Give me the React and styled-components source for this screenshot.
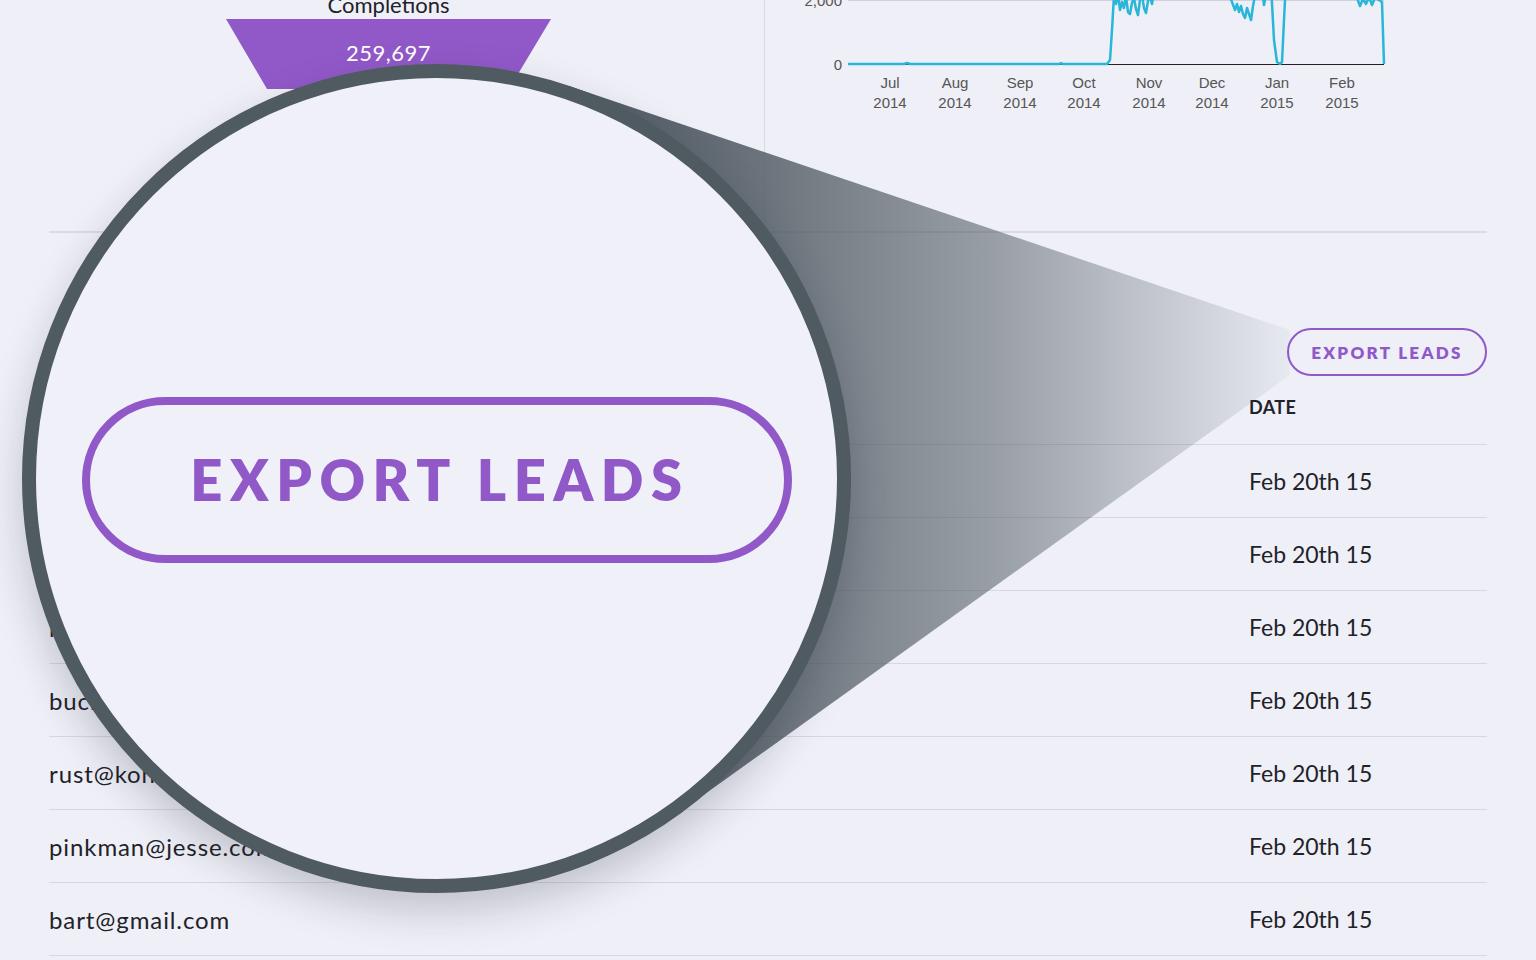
import React from "react";
import styled, { createGlobalStyle } from "styled-components";

const GlobalStyle = createGlobalStyle`
   html, body {
      margin: 0;
      padding: 0;
      background: #eeeff7;
   }
   body {
      font-family: "Lato", "Noto Sans", sans-serif;
      color: #1f2228;
   }
`;

const PURPLE = "#9159c8";

const Page = styled.div`
   position: relative;
   width: 1536px;
   height: 960px;
   overflow: hidden;
   background: #eeeff7;
`;

const TopSection = styled.section`
   display: flex;
   height: 231px;
   margin: 0 49px;
   border-bottom: 2px solid #d9dae3;
`;

const FunnelPanel = styled.div`
   width: 716px;
   padding-right: 36px;
   box-sizing: border-box;
   border-right: 1px solid #d9dae3;
   display: flex;
   flex-direction: column;
   align-items: center;
`;

const FunnelTitle = styled.div`
   margin-top: -8px;
   font-size: 22px;
   line-height: 26px;
   color: #1f2228;
`;

const FunnelStep = styled.div`
   margin-top: 1px;
   width: 325px;
   height: 70px;
   padding-bottom: 3px;
   box-sizing: border-box;
   background: ${PURPLE};
   clip-path: polygon(0 0, 100% 0, 283px 100%, 41px 100%);
   display: flex;
   align-items: center;
   justify-content: center;
   color: #fff;
   font-size: 22px;
   letter-spacing: 0.5px;
`;

const ChartPanel = styled.div`
   flex: 1;
`;

const ChartSvg = styled.svg`
   display: block;
   font-family: "Liberation Sans", Arial, sans-serif;
   font-size: 15px;
`;

const TableSection = styled.section`
   margin: 0 49px;
`;

const Toolbar = styled.div`
   display: flex;
   justify-content: flex-end;
   padding-top: 95px;
`;

const ExportButton = styled.button`
   width: 200px;
   height: 48px;
   box-sizing: border-box;
   border: 2px solid ${PURPLE};
   border-radius: 24px;
   background: transparent;
   color: ${PURPLE};
   font-family: "Lato", sans-serif;
   font-weight: 800;
   font-size: 17px;
   letter-spacing: 2.3px;
   padding: 0;
   cursor: pointer;
   position: relative;
   z-index: 3;
`;

const Row = styled.div`
   display: grid;
   grid-template-columns: 1200px 1fr;
   align-items: center;
   box-sizing: border-box;
   height: ${(p) => (p.$header ? "69px" : "73px")};
   padding-bottom: ${(p) => (p.$header ? "6px" : "0")};
   border-bottom: 1px solid #d6d7e0;
   font-size: ${(p) => (p.$header ? "18px" : "23px")};
   font-weight: ${(p) => (p.$header ? 700 : 400)};
   letter-spacing: ${(p) => (p.$header ? "0.4px" : "0")};
   color: #1f2228;
`;

const Email = styled.span`
   font-size: 24px;
   letter-spacing: 0.9px;
`;

const Cone = styled.svg`
   position: absolute;
   left: 0;
   top: 0;
   z-index: 1;
   pointer-events: none;
`;

const Lens = styled.div`
   position: absolute;
   left: 22px;
   top: 64px;
   width: 829px;
   height: 829px;
   box-sizing: border-box;
   border: 14px solid #4f5a61;
   border-radius: 50%;
   background: #f0f0f8;
   box-shadow: 0 18px 40px rgba(30, 35, 50, 0.22);
   z-index: 2;
   display: flex;
   align-items: center;
   justify-content: center;
`;

const BigButton = styled.div`
   width: 710px;
   height: 166px;
   box-sizing: border-box;
   border: 8px solid ${PURPLE};
   border-radius: 83px;
   display: flex;
   align-items: center;
   justify-content: center;
   color: ${PURPLE};
   font-weight: 800;
   font-size: 56px;
   letter-spacing: 7.6px;
   padding-left: 7px;
   margin-top: 2px;
`;

const months = [
   ["Jul", "2014", 890],
   ["Aug", "2014", 955],
   ["Sep", "2014", 1020],
   ["Oct", "2014", 1084],
   ["Nov", "2014", 1149],
   ["Dec", "2014", 1212],
   ["Jan", "2015", 1277],
   ["Feb", "2015", 1342],
];

const series =
   "M849 64 L905 64 L908 63 L911 64 L1060 64 L1062 63 L1064 64 L1108 64 L1111 60 L1113 30 L1115 -5 L1117 4 L1119 -6 L1121 10 L1123 2 L1125 8 L1127 -4 L1129 12 L1131 14 L1133 3 L1135 -2 L1137 9 L1139 15 L1141 0 L1143 -5 L1145 8 L1147 13 L1149 1 L1151 -3 L1153 4 L1155 -8 L1158 -30 L1225 -30 L1230 -5 L1233 2 L1236 10 L1238 4 L1240 12 L1242 6 L1244 14 L1246 18 L1248 8 L1250 14 L1252 20 L1254 6 L1256 -4 L1258 -20 L1262 -20 L1265 5 L1268 -10 L1272 -15 L1275 40 L1278 62 L1281 64 L1283 62 L1285 20 L1287 -20 L1355 -20 L1358 -2 L1361 6 L1364 -1 L1367 4 L1370 -3 L1373 5 L1376 -2 L1380 0 L1383 2 L1385 64";

const leads = [
   "walter@white.com",
   "saul@goodman.com",
   "hank@schrader.com",
   "buckley@bmail.com",
   "rust@kohle.com",
   "pinkman@jesse.com",
   "bart@gmail.com",
];

function Chart() {
   return (
      <ChartSvg width="721" height="120" viewBox="766 0 721 120">
         <line x1="849" y1="0.5" x2="1385" y2="0.5" stroke="#d0d0d8" />
         <line x1="849" y1="64.5" x2="1385" y2="64.5" stroke="#222" />
         <text x="843" y="6" textAnchor="end" fill="#555">2,000</text>
         <text x="843" y="70" textAnchor="end" fill="#555">0</text>
         {months.map(([m, y, x]) => (
            <g key={m} fill="#555" textAnchor="middle">
               <text x={x + 1} y="88">{m}</text>
               <text x={x + 1} y="108">{y}</text>
            </g>
         ))}
         <path d={series} fill="none" stroke="#29b6d8" strokeWidth="2.5" strokeLinejoin="round" />
      </ChartSvg>
   );
}

export default function App() {
   return (
      <Page>
         <GlobalStyle />
         <TopSection>
            <FunnelPanel>
               <FunnelTitle>Completions</FunnelTitle>
               <FunnelStep>259,697</FunnelStep>
            </FunnelPanel>
            <ChartPanel>
               <Chart />
            </ChartPanel>
         </TopSection>

         <TableSection>
            <Toolbar>
               <ExportButton>EXPORT LEADS</ExportButton>
            </Toolbar>
            <Row $header>
               <span>EMAIL</span>
               <span>DATE</span>
            </Row>
            {leads.map((email) => (
               <Row key={email}>
                  <Email>{email}</Email>
                  <span>Feb 20th 15</span>
               </Row>
            ))}
         </TableSection>

         <Cone width="1536" height="960" viewBox="0 0 1536 960">
            <defs>
               <linearGradient id="coneFade" gradientUnits="userSpaceOnUse" x1="580" y1="0" x2="1290" y2="0">
                  <stop offset="0" stopColor="#4f5961" stopOpacity="1" />
                  <stop offset="0.25" stopColor="#4f5961" stopOpacity="0.83" />
                  <stop offset="0.59" stopColor="#4f5961" stopOpacity="0.53" />
                  <stop offset="0.87" stopColor="#4f5961" stopOpacity="0.2" />
                  <stop offset="1" stopColor="#4f5961" stopOpacity="0.04" />
               </linearGradient>
            </defs>
            <polygon points="436,478 569,86 1290,330 1290,375 677,814" fill="url(#coneFade)" />
         </Cone>

         <Lens>
            <BigButton>EXPORT LEADS</BigButton>
         </Lens>
      </Page>
   );
}
